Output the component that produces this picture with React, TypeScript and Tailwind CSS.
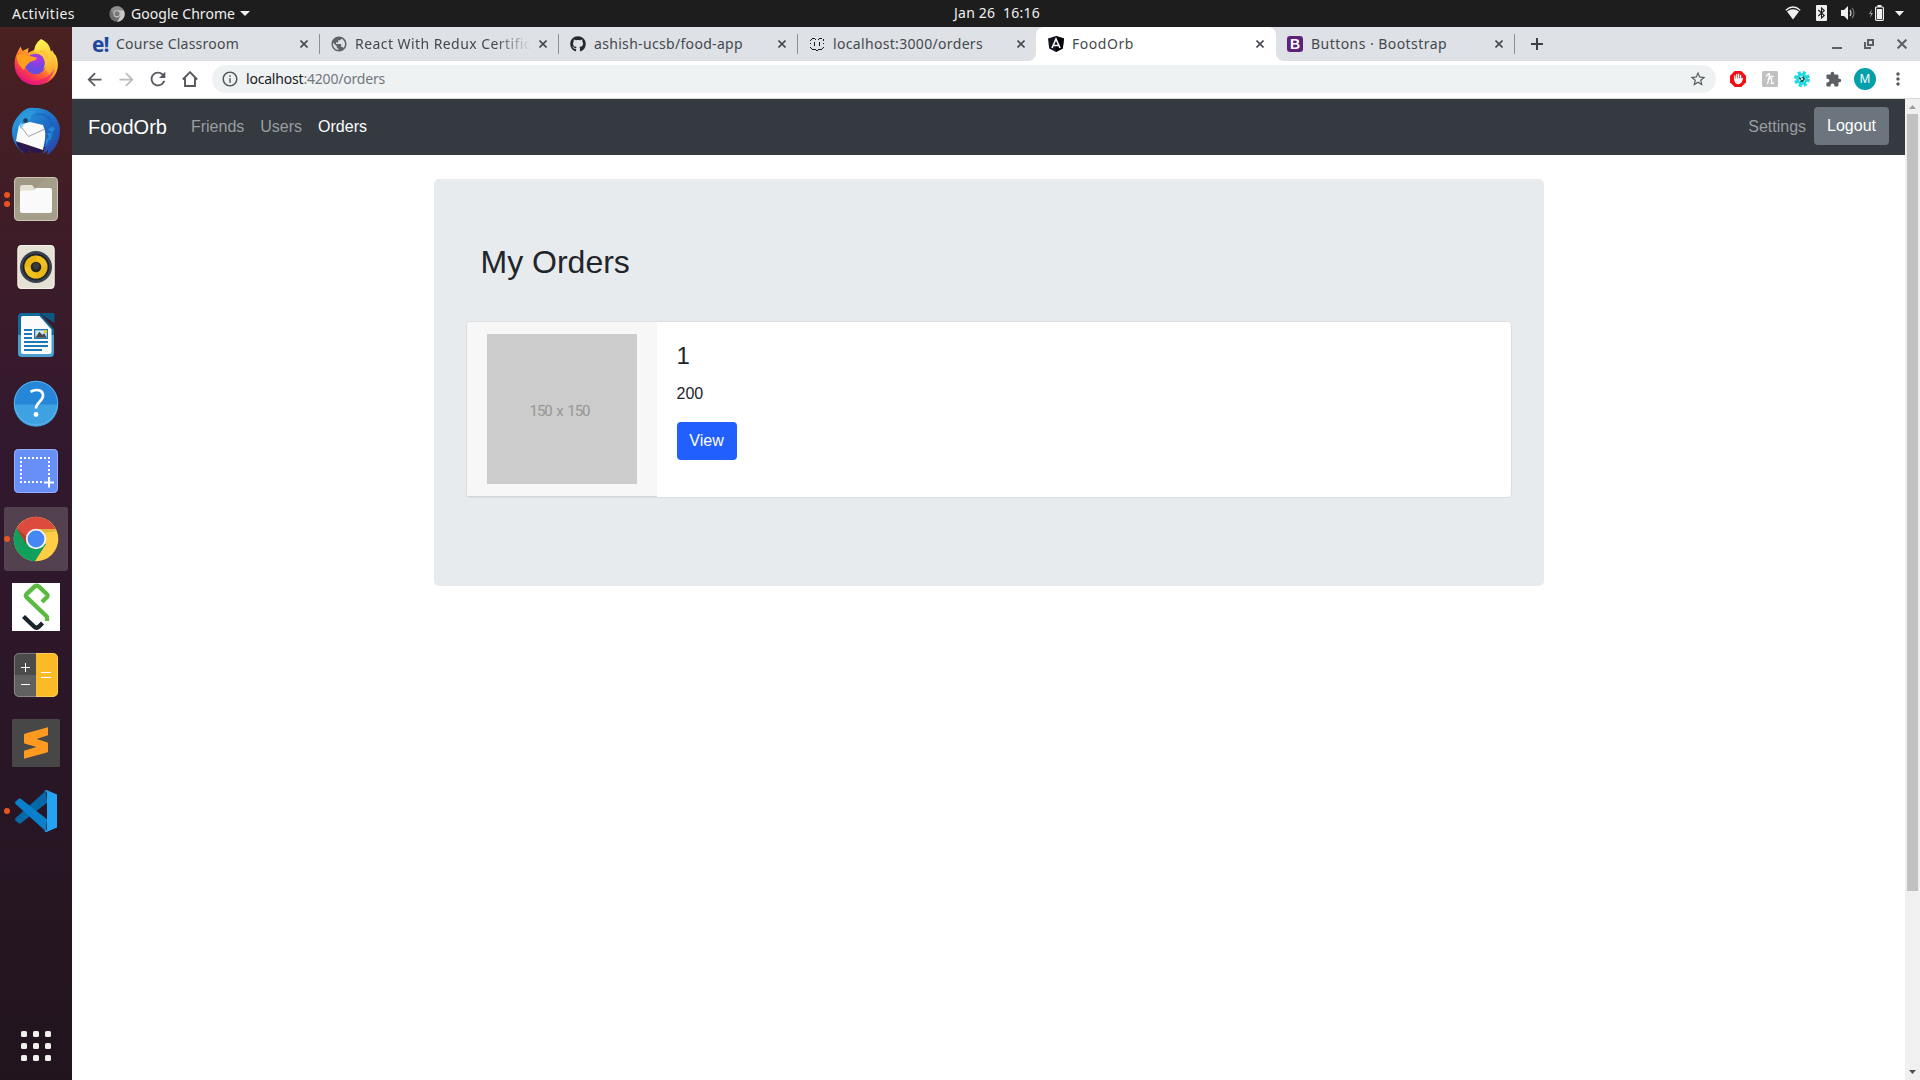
import { useLayoutEffect, useRef, useState, type ReactNode } from "react";
import { FaGithub } from "react-icons/fa";
import { MdArrowBack, MdArrowForward, MdExtension, MdInfoOutline, MdMoreVert, MdPublic, MdRefresh, MdStarBorder } from "react-icons/md";

/* Text whose letter spacing is adjusted so that it fills a given width. */
function FitText({ width, className = "", children }: { width: number; className?: string; children: ReactNode }) {
  const ref = useRef<HTMLSpanElement>(null);
  const [spacing, setSpacing] = useState(0);
  useLayoutEffect(() => {
    const el = ref.current;
    if (!el) return;
    const count = (el.textContent ?? "").length;
    setSpacing((width - el.getBoundingClientRect().width) / count);
  }, [width]);
  return (
    <span ref={ref} className={`inline-block whitespace-pre ${className}`} style={{ letterSpacing: `${spacing}px` }}>
      {children}
    </span>
  );
}

function TopBar() {
  return (
    <header className="flex h-[27px] shrink-0 items-center bg-[#1d1d1d] font-['Noto_Sans',sans-serif] text-[14px] leading-[27px] text-[#f0f0f0]">
      <div className="flex w-[954px] items-center pl-3">
        <FitText width={63}>Activities</FitText>
        <svg className="ml-[34px] size-4" viewBox="0 0 16 16">
          <circle cx="8" cy="8" r="7.7" fill="#6c6c6c" />
          <path d="M8 4.2h6.7A7.7 7.7 0 0 1 8 15.7L11.5 10z" fill="#c9c9c9" />
          <path d="M1.8 3.5A7.7 7.7 0 0 1 14.7 4.2H8L4.6 8.6z" fill="#8f8f8f" />
          <circle cx="8" cy="7.8" r="3.6" fill="#c4c4c4" />
          <circle cx="8" cy="7.8" r="2.5" fill="#777" />
        </svg>
        <FitText width={104} className="ml-[6px]">Google Chrome</FitText>
        <svg className="ml-[5px] h-[5px] w-[10px]" viewBox="0 0 10 5"><path d="M0 0h10L5 5z" fill="#f0f0f0" /></svg>
      </div>
      <div className="-mt-[2px]"><FitText width={86}>Jan 26  16:16</FitText></div>
      <div className="-mt-px flex flex-1 items-center justify-end pr-[16px]">
        <svg className="mr-[15px] h-4 w-4" viewBox="0 0 16 16">
          <path d="M.8 5.2Q8-1.2 15.2 5.2" fill="none" stroke="#f0f0f0" strokeWidth="1.3" />
          <path d="M2 6.6Q8 2 14 6.6L8 14.5z" fill="#f0f0f0" />
        </svg>
        <svg className="mr-[14px] h-4 w-[11px]" viewBox="0 0 11 16">
          <rect width="11" height="16" rx="1" fill="#f0f0f0" />
          <path d="M2.3 5l6 5.5L5.500 13V3l2.800 2.500-6 5.500" fill="none" stroke="#1d1d1d" strokeWidth="1.1" />
        </svg>
        <svg className="mr-[13px] h-4 w-[15px]" viewBox="0 0 15 16">
          <path d="M0 5h3l4-4v14l-4-4H0z" fill="#f0f0f0" />
          <path d="M9 5q2 3 0 6" fill="none" stroke="#d0d0d0" strokeWidth="1.2" />
          <path d="M11 2.8q4 5.2 0 10.4" fill="none" stroke="#777" strokeWidth="1.2" />
        </svg>
        <svg className="mr-[11px] h-4 w-[15px]" viewBox="0 0 15 16">
          <path d="M3 4L0 9h2l-1 4 3-5H2z" fill="#999" />
          <path d="M8.5 0h4v2h-4z" fill="#f0f0f0" />
          <rect x="6.6" y="2" width="7.8" height="13.3" rx="1" fill="none" stroke="#f0f0f0" strokeWidth="1.2" />
          <rect x="8" y="4" width="5" height="10" fill="#f0f0f0" />
        </svg>
        <svg className="h-[5px] w-[9px]" viewBox="0 0 9 5"><path d="M0 0h9L4.5 5z" fill="#f0f0f0" /></svg>
      </div>
    </header>
  );
}

function Firefox() {
  return (
    <svg viewBox="0 0 48 48" className="size-12">
      <defs>
        <linearGradient id="ff1" x1=".85" y1=".1" x2=".2" y2=".9">
          <stop offset="0" stopColor="#fff44f" /><stop offset=".35" stopColor="#ffa72c" /><stop offset=".65" stopColor="#ff5634" /><stop offset="1" stopColor="#e8127c" />
        </linearGradient>
        <radialGradient id="ff2" cx=".6" cy=".25"><stop offset="0" stopColor="#b833e1" /><stop offset="1" stopColor="#6a4be0" /></radialGradient>
        <linearGradient id="ff3" x1=".4" y1="0" x2=".6" y2="1"><stop offset="0" stopColor="#fff450" /><stop offset="1" stopColor="#ff9a28" /></linearGradient>
      </defs>
      <path d="M5 14L8.5 7.5 10.5 12 16.5 9 16 14C24 8 40 10 44 17 50 31 41 46 24 46 7 46-2 29 5 14z" fill="url(#ff1)" />
      <path d="M29 0c8 4 9 8 10 13l1-2c7 11 6 24-4 30 2-5 1-8-3-10 6-9-2-16-11-19 1-6 3-9 7-12z" fill="url(#ff3)" />
      <circle cx="23.5" cy="25" r="10.3" fill="url(#ff2)" />
      <path d="M5 16c4-2 8-1 10 1 4 0 9 1 10 2-1 3-5 3-7 4-3 3-5 4-6 8C7 27 4 22 5 16z" fill="#ff9f1e" />
      <path d="M24 13c5 0 8 2 9 5l-3-1c3 4 4 9 1 13 5-2 8-11 3-17-3-3-7-2-10 0z" fill="#ffc23a" />
      <path d="M2.3 29c4 10 14 15 25 12 8-2 13-7 15-12-1 9-8 17-18 17S4 38 2.3 29z" fill="#e9157f" opacity=".65" />
    </svg>
  );
}

function Thunderbird() {
  return (
    <svg viewBox="0 0 48 48" className="size-12">
      <defs><linearGradient id="tb" x1="0" y1="0" x2="1" y2="1"><stop offset="0" stopColor="#2bace6" /><stop offset=".5" stopColor="#1f6fc9" /><stop offset="1" stopColor="#2a3fa3" /></linearGradient></defs>
      <path d="M9 6C13 1 19 0 22 1c14-1 26 9 26 22 0 12-6 21-13 25l1-5-5 4 2-7L6 35l6 11C4 41 0 33 0 24c0-6 3-12 9-18z" fill="url(#tb)" />
      <path d="M4 35l27 8-4 3c-5 0-8-1-11-4l1 5C9 45 5 40 4 35z" fill="#291850" />
      <path d="M7 18l11-3 13 3 2 6c1 7-1 13-2 19L4 34c1-6 2-11 3-16z" fill="#fafafa" />
      <path d="M7 17l9.500 12.500L33 22" fill="none" stroke="#999" strokeWidth=".9" />
      <path d="M9 11c3-6 8-8 15-7l-5 5c0 4-3 6-8 8l-2 5-3-8z" fill="#2b99dc" />
      <path d="M20 10c9-6 18 1 18 7l4 2-3 1 3 3-4 1 3 4-5 1 2 5-4 1 1 5c10-8 11-23 1-31C31 5 24 6 20 10z" fill="#1665bd" opacity=".8" />
      <path d="M35 18l5 2-4 2 4 4-5 0 2 5-3 1v8l2-6 3-2 1-6 3-5z" fill="#2689d8" />
      <circle cx="13.500" cy="13.500" r="2.300" fill="#243c60" />
      <path d="M8 16l4 2-3 4z" fill="#8dd4f4" />
    </svg>
  );
}

function Files() {
  return (
    <svg viewBox="0 0 48 48" className="size-12">
      <rect x="2" y="2" width="44" height="44" rx="4.500" fill="#c9c4b4" />
      <rect x="3" y="3" width="42" height="42" rx="4" fill="#9f9885" />
      <path d="M3 34L34 3h7a4 4 0 0 1 4 4v34a4 4 0 0 1-4 4H7a4 4 0 0 1-4-4z" fill="#aaa391" opacity=".5" />
      <path d="M8 18v-6a2 2 0 0 1 2-2h10l3 3.500h-1v5z" fill="#e4e0d3" />
      <path d="M8 17.500a2 2 0 0 1 2-2h11l3-2.500h14a2 2 0 0 1 2 2V36a2 2 0 0 1-2 2H10a2 2 0 0 1-2-2z" fill="#fafafa" />
    </svg>
  );
}

function Rhythmbox() {
  return (
    <svg viewBox="0 0 48 48" className="size-12">
      <rect x="5.500" y="2" width="37" height="44" rx="4" fill="#e5e1d5" />
      <rect x="6" y="2.500" width="36" height="43" rx="4" fill="none" stroke="#f5f2ea" />
      <circle cx="24" cy="24" r="16" fill="#3c4350" />
      <circle cx="24" cy="24" r="13.500" fill="#20242d" />
      <circle cx="24" cy="24" r="11.500" fill="#f3c01e" />
      <path d="M12.500 24a11.500 11.500 0 0 1 11.500-11.500v11.500zM35.500 24a11.500 11.500 0 0 1-11.500 11.500v-11.500z" fill="#dba908" opacity=".4" />
      <circle cx="24" cy="24" r="5.300" fill="#262626" />
      <circle cx="24" cy="23" r="3.200" fill="#3c3c3c" />
    </svg>
  );
}

function Writer() {
  return (
    <svg viewBox="0 0 48 48" className="size-12">
      <path d="M10 2h18.500L42 17.500V42a4 4 0 0 1-4 4H10a4 4 0 0 1-4-4V6a4 4 0 0 1 4-4z" fill="#116a9c" />
      <path d="M6 24h36v18a4 4 0 0 1-4 4H10a4 4 0 0 1-4-4z" fill="#4a9fce" />
      <path d="M11 5h16.500L39.500 18.500V41a2 2 0 0 1-2 2H11a2 2 0 0 1-2-2V7a2 2 0 0 1 2-2z" fill="#fbfbfb" />
      <path d="M27 2H41q1.500 0 1.500 1.500V12z" fill="#0a5883" />
      <path d="M28 2.500l14.500 16" stroke="#34192d" strokeWidth="1.200" opacity=".6" />
      <path d="M12 19h8M12 23h8M12 27h8M12 31h24M12 35h24M12 39h18" stroke="#1a7ab3" strokeWidth="2" />
      <path d="M22 18h14v10H22z" fill="#1a7ab3" />
      <path d="M23.300 19.300h11.400v7.400H23.300z" fill="#cfe7f5" />
      <path d="M23.300 26.700l4-6 3 3 2-1.500 2.400 4.500z" fill="#4b4b4b" />
      <circle cx="33.500" cy="20.500" r="1.700" fill="#eccb13" />
    </svg>
  );
}

function Help() {
  return (
    <svg viewBox="0 0 48 48" className="size-12">
      <circle cx="24" cy="24" r="22.200" fill="#2687d8" />
      <path d="M1.800 25.500h44.400a22.200 22.200 0 0 1-44.400 0z" fill="#3ea2e2" />
      <circle cx="24" cy="24" r="21.700" fill="none" stroke="#65b7ee" strokeWidth=".8" />
      <path d="M18.500 12.800c6.500-3.500 12.500-1.500 12.500 3.700 0 6-7 6.500-7 13" fill="none" stroke="#fff" strokeWidth="2.700" />
      <circle cx="24" cy="35.500" r="2.400" fill="#fff" />
    </svg>
  );
}

function Screenshot() {
  return (
    <svg viewBox="0 0 48 48" className="size-12">
      <rect x="2" y="2" width="44" height="44" rx="4.500" fill="#688ff6" />
      <rect x="2.500" y="2.500" width="43" height="43" rx="4" fill="none" stroke="#92b0ff" />
      <path d="M8 11h30M9 14v23M37 14v17M12 35h18" fill="none" stroke="#fff" strokeWidth="2" strokeDasharray="2 2" />
      <path d="M32 35.500h10M37 30.500v10" stroke="#fff" strokeWidth="2" />
    </svg>
  );
}

function Chrome() {
  return (
    <svg viewBox="0 0 48 48" className="size-12">
      <circle cx="24" cy="24" r="22.300" fill="#ffce44" />
      <path d="M24 24L4.700 12.900A22.300 22.300 0 0 0 23 46.300L34 29z" fill="#11a05c" />
      <path d="M4.700 12.900A22.300 22.300 0 0 1 43.800 14H24L14.500 28.500z" fill="#dd4b3e" />
      <path d="M24 14h19.800l.8 2-13 2z" fill="#c99c28" opacity=".5" />
      <path d="M4.700 12.900L14 29l2-6z" fill="#ad3427" opacity=".7" />
      <circle cx="24" cy="24" r="10.200" fill="#f3f3f3" />
      <circle cx="24" cy="24" r="8.400" fill="#4587f3" />
    </svg>
  );
}

function StrokeS() {
  return (
    <svg viewBox="0 0 48 48" className="size-12">
      <path d="M0 0h48v48H0z" fill="#fff" />
      <path d="M30 19l5-5q1-1.500 0-2.700L27 3.600q-2-1.800-4.500 0l-8 7.500q-1.300 1.500 0 3l20.500 19.700V38" fill="none" stroke="#5abb40" strokeWidth="4.300" strokeLinejoin="round" />
      <path d="M11.500 33.500l10.500 10q2.500 2.500 5 0l3.500-3.500" fill="none" stroke="#17242c" strokeWidth="4.300" />
    </svg>
  );
}

function Calculator() {
  return (
    <svg viewBox="0 0 48 48" className="size-12">
      <path d="M7 2h17v44H7a5 5 0 0 1-5-5V7a5 5 0 0 1 5-5z" fill="#4b4b4b" />
      <path d="M2 24h22v22H7a5 5 0 0 1-5-5z" fill="#606060" />
      <path d="M24 2h17a5 5 0 0 1 5 5v34a5 5 0 0 1-5 5H24z" fill="#fbbb27" />
      <rect x="2.400" y="2.400" width="43.200" height="43.200" rx="4.800" fill="none" stroke="#fff" strokeOpacity=".35" strokeWidth=".8" />
      <path d="M9 16.500h9M13.500 12v9M9 33.500h9M29 21.500h10M29 26.500h10" stroke="#fff" strokeWidth="1" />
    </svg>
  );
}

function Sublime() {
  return (
    <svg viewBox="0 0 48 48" className="size-12">
      <rect width="48" height="48" rx="1.500" fill="#474747" />
      <path d="M12 24.500l24 5.500v-4L24 20z" fill="#d87b12" />
      <path d="M12 16q0-1.200 1.200-1.600L36 8.300v8L24.500 20 35 23.300q1 .3 1 1.400v7.600q0 1-1 1.300L12 39.800v-8L24.500 28 13 24.600q-1-.3-1-1.400z" fill="#ff9a20" />
    </svg>
  );
}

function VSCode() {
  return (
    <svg viewBox="0 0 48 48" className="size-12">
      <path d="M34 3.500L3.600 31q-1.200 1.200 0 2.400l3 2.800q1 .9 2.200 0L35 15.800z" fill="#0569a8" />
      <path d="M34 44.500L3.600 17q-1.200-1.200 0-2.400l3-2.800q1-.9 2.200 0L35 32.200z" fill="#0a7fcb" />
      <path d="M34.500 3L45 7.500v33L34.500 45q-1.500 0-2.500-1.500 3 1 3-1.500V6q0-2.500-3-1.500Q33 3 34.500 3z" fill="#23a3f2" />
    </svg>
  );
}

const dock: { name: string; icon: ReactNode; dots: number; active?: boolean }[] = [
  { name: "Firefox", icon: <Firefox />, dots: 0 },
  { name: "Thunderbird", icon: <Thunderbird />, dots: 0 },
  { name: "Files", icon: <Files />, dots: 2 },
  { name: "Rhythmbox", icon: <Rhythmbox />, dots: 0 },
  { name: "Writer", icon: <Writer />, dots: 0 },
  { name: "Help", icon: <Help />, dots: 0 },
  { name: "Screenshot", icon: <Screenshot />, dots: 0 },
  { name: "Chrome", icon: <Chrome />, dots: 1, active: true },
  { name: "StrokeS", icon: <StrokeS />, dots: 0 },
  { name: "Calculator", icon: <Calculator />, dots: 0 },
  { name: "Sublime", icon: <Sublime />, dots: 0 },
  { name: "VSCode", icon: <VSCode />, dots: 1 },
];

function Dock() {
  return (
    <aside className="flex w-[72px] shrink-0 flex-col bg-linear-to-b from-[#4a2020] via-[#32182e] via-40% to-[#21141d] pt-[2px]">
      {dock.map((item) => (
        <div key={item.name} className="flex h-[68px] items-center">
          <div className={`mx-1 flex h-16 w-full items-center ${item.active ? "rounded-[3px] bg-[#534150]" : ""}`}>
            <div className="flex w-2 shrink-0 flex-col gap-[3px]">
              {Array.from({ length: item.dots }, (_, i) => (
                <span key={i} className="size-[6px] rounded-full bg-[#e95420]" />
              ))}
            </div>
            {item.icon}
          </div>
        </div>
      ))}
      <div className="mt-auto mb-[19px] grid grid-cols-3 gap-[6px] self-center">
        {Array.from({ length: 9 }, (_, i) => (
          <span key={i} className="size-[6px] rounded-[1.500px] bg-[#f0f0ec]" />
        ))}
      </div>
    </aside>
  );
}

function CloseX({ className = "size-[8px]" }: { className?: string }) {
  return <svg className={className} viewBox="0 0 8 8"><path d="M.5.5l7 7M7.500.5l-7 7" stroke="currentColor" strokeWidth="1.600" /></svg>;
}

const tabs: { title: string; width: number; icon: ReactNode; active?: boolean; line?: boolean; fade?: boolean }[] = [
  {
    title: "Course Classroom", width: 123, line: true,
    icon: <span className="block w-4 font-['Open_Sans',sans-serif] text-[21px] leading-4 font-bold tracking-[-1px] text-[#1d489b]">e!</span>,
  },
  { title: "React With Redux Certific", width: 176, line: true, fade: true, icon: <MdPublic className="-m-px size-[18px] text-[#5f6368]" /> },
  { title: "ashish-ucsb/food-app", width: 149, line: true, icon: <FaGithub className="size-4 text-[#24292e]" /> },
  {
    title: "localhost:3000/orders", width: 150,
    icon: (
      <svg className="size-4" viewBox="0 0 16 16">
        <path d="M2 3.500h1M3 2.500h3M6 3.500h1M9 3.500h1M10 2.500h3M14 3.500h1M1 4.500h1M14 4.500h1M1 11.500h1M14 11.500h1M2 12.500h1M3 13.500h4M7 14.500h2M9 13.500h4M13 12.500h1M1 7.500h1M14 7.500h1" stroke="#1a1a1a" />
        <path d="M5.500 6v4M10.500 6v4" stroke="#1a1a1a" />
      </svg>
    ),
  },
  {
    title: "FoodOrb", width: 62, active: true,
    icon: (
      <svg className="size-4" viewBox="0 0 16 16">
        <path d="M8 0l8 2.600-1.200 10L8 16l-6.800-3.400L0 2.600z" fill="#13151f" />
        <path d="M8 0l8 2.600-1.200 10L8 16z" fill="#05060c" />
        <path d="M4 12L8 3l4 9M5.500 9.500h5" fill="none" stroke="#fff" strokeWidth="1.600" />
      </svg>
    ),
  },
  {
    title: "Buttons · Bootstrap", width: 136, line: true,
    icon: (
      <span className="block size-4 rounded-[3px] bg-[#5c2178] text-center font-['Liberation_Sans',sans-serif] text-[14px] leading-4 font-bold text-white">B</span>
    ),
  },
];

function TabStrip() {
  return (
    <div className="flex h-[34px] shrink-0 bg-[#dee1e6] pl-[9px] text-[#45494d]">
      {tabs.map((tab) => (
        <div
          key={tab.title}
          className={`relative flex items-center ${tab.active ? "-ml-px w-[240px] rounded-t-lg bg-white pl-3" : "w-[239px] pl-[11px]"}`}
        >
          <div className="size-4 shrink-0">{tab.icon}</div>
          <div className={`ml-2 w-[176px] shrink-0 overflow-hidden font-['Noto_Sans',sans-serif] text-[14px] leading-[34px] ${tab.fade ? "mask-r-from-80% mask-r-to-100%" : ""}`}>
            <FitText width={tab.width}>{tab.title}</FitText>
          </div>
          <CloseX className="ml-2 size-[8px] shrink-0" />
          {tab.line && <span className="ml-auto h-5 w-px bg-[#8d9095]" />}
          {tab.active && (
            <>
              <svg className="absolute bottom-0 -left-2 size-2" viewBox="0 0 8 8"><path d="M8 0v8H0a8 8 0 0 0 8-8z" fill="#fff" /></svg>
              <svg className="absolute -right-2 bottom-0 size-2" viewBox="0 0 8 8"><path d="M0 0v8h8a8 8 0 0 1-8-8z" fill="#fff" /></svg>
            </>
          )}
        </div>
      ))}
      <div className="flex flex-1 items-center pr-[13px] text-[#5b5f63]">
        <svg className="ml-4 size-3 text-[#3c4043]" viewBox="0 0 12 12"><path d="M6 0v12M0 6h12" stroke="currentColor" strokeWidth="2" /></svg>
        <svg className="mt-2 ml-auto h-[2px] w-[10px]" viewBox="0 0 10 2"><path d="M0 0h10v2H0z" fill="currentColor" /></svg>
        <svg className="ml-[22px] size-[10px]" viewBox="0 0 10 10"><path d="M4 1h5v5H4zM1 3v6h6" fill="none" stroke="currentColor" strokeWidth="2" /></svg>
        <CloseX className="ml-[23px] size-[10px]" />
      </div>
    </div>
  );
}

function Toolbar() {
  return (
    <div className="flex h-[38px] shrink-0 items-center border-b border-[#d6dadb] bg-white pb-px pl-3 text-[#55595e]">
      <MdArrowBack className="size-[21px]" />
      <MdArrowForward className="ml-[11px] size-[21px] text-[#b9bbbe]" />
      <MdRefresh className="ml-[10px] size-[22px]" />
      <svg className="ml-[13px] size-4" viewBox="0 0 16 16">
        <path d="M.8 8.500L8 1.200l7.200 7.300M3 7v8h10V7" fill="none" stroke="currentColor" strokeWidth="1.900" />
      </svg>
      <div className="ml-[14px] flex h-7 w-[1504px] items-center rounded-full bg-[#eef2f3] pl-[9px]">
        <MdInfoOutline className="size-[18px]" />
        <div className="ml-[7px] font-['Noto_Sans',sans-serif] text-[14px] leading-7 text-[#72777b]">
          <FitText width={139}><span className="text-[#202124]">localhost</span>:4200/orders</FitText>
        </div>
        <MdStarBorder className="mr-[9px] ml-auto size-[18px]" />
      </div>
      <svg className="ml-[14px] size-4" viewBox="0 0 16 16">
        <path d="M4.700 0h6.600L16 4.700v6.600L11.300 16H4.700L0 11.300V4.700z" fill="#f40d12" />
        <path d="M4.800 8.500V5M6.700 8V3.400M8.600 8V3.200M10.600 8V4.500" stroke="#fff" strokeWidth="1.300" strokeLinecap="round" />
        <path d="M4.200 7.500h7.100l1.200-.8q.8 0 .5.900-1.200 5.600-4.800 5.600-4 0-4-5.700z" fill="#fff" />
      </svg>
      <svg className="ml-4 size-4" viewBox="0 0 16 16">
        <rect width="16" height="16" rx="1.500" fill="#c1c1c1" />
        <path d="M4 5.500q2-3 3.500-2.800Q7 8 5.500 13M5.800 9q2-2.500 3.700-1.500Q10 9 9.300 12q.7 1.500 2.700-.5M7 5.500h4.500" fill="none" stroke="#fff" strokeWidth="1.300" />
      </svg>
      <svg className="ml-4 size-4" viewBox="0 0 16 16">
        <circle cx="8" cy="8" r="6.500" fill="none" stroke="#18dce2" strokeWidth="3" strokeDasharray="3.100 2" />
        <circle cx="8" cy="8" r="5.800" fill="#18dce2" />
        <circle cx="8" cy="8" r="3.300" fill="#a8f1f1" />
        <path d="M5 6l2 1 3-2 1 3-2 3H6l1-2-2-1z" fill="#27575e" />
        <circle cx="8" cy="8" r="1" fill="#fff" />
      </svg>
      <MdExtension className="ml-[15px] size-[17px] text-[#5b5f63]" />
      <span className="ml-[12px] flex size-[22px] items-center justify-center rounded-full bg-[#02a0ab] font-['Noto_Sans',sans-serif] text-[12px] leading-none text-white">M</span>
      <MdMoreVert className="ml-3 size-5" />
    </div>
  );
}

function Navbar() {
  return (
    <nav className="flex h-14 items-center bg-[#343a40] px-4 text-[16px] leading-6 text-[#9a9da0]">
      <a className="mr-4 text-[20px] leading-[30px] text-white">FoodOrb</a>
      <a className="p-2">Friends</a>
      <a className="p-2">Users</a>
      <a className="p-2 text-white">Orders</a>
      <a className="ml-auto p-2">Settings</a>
      <button className="mb-[2px] h-[38px] rounded bg-[#6c757d] px-[13px] pb-px leading-6 text-white">Logout</button>
    </nav>
  );
}

function OrderCard() {
  return (
    <div className="mt-[39.600px] flex rounded border border-[#dcdfe2] bg-white">
      <div className="rounded-t-[3px] border-b border-[#d8d8d8] bg-[#f7f7f7] px-5 py-3">
        <div className="flex size-[150px] items-center justify-center bg-[#cccccc] font-['Roboto',sans-serif] text-[15px] text-[#969696]">
          <span className="mt-[5px] -ml-[4px] [word-spacing:2px]"><FitText width={60}>150 x 150</FitText></span>
        </div>
      </div>
      <div className="flex flex-col items-start p-5">
        <h4 className="mb-[11.200px] text-[24px] leading-[28.800px]">1</h4>
        <p className="mb-4 text-[16px] leading-6">200</p>
        <button className="h-[38px] w-[60px] rounded bg-[#225fff] text-[16px] leading-6 text-white">View</button>
      </div>
    </div>
  );
}

function Scrollbar() {
  return (
    <div className="flex w-[15px] shrink-0 flex-col items-center bg-[#f0f0f0]">
      <svg className="mt-[6px] h-[4px] w-[7px]" viewBox="0 0 7 4"><path d="M3.500 0L7 4H0z" fill="#9d9d9d" /></svg>
      <div className="mt-[5px] h-[777px] w-[11px] bg-[#c1c1c1]" />
      <svg className="mt-auto mb-[6px] h-[4px] w-[7px]" viewBox="0 0 7 4"><path d="M0 0h7L3.500 4z" fill="#505050" /></svg>
    </div>
  );
}

export default function App() {
  return (
    <div className="flex h-[1080px] w-[1920px] flex-col overflow-hidden bg-white">
      <TopBar />
      <div className="flex min-h-0 flex-1">
        <Dock />
        <div className="flex min-w-0 flex-1 flex-col">
          <TabStrip />
          <Toolbar />
          <div className="flex min-h-0 flex-1">
            <div className="flex-1 font-['Liberation_Sans',sans-serif] text-[#212529]">
              <Navbar />
              <main className="mx-auto mt-6 h-[407px] w-[1110px] rounded-[5px] bg-[#e8ebee] px-8 py-16">
                <h2 className="pl-[15px] text-[32px] leading-[38.400px]">My Orders</h2>
                <OrderCard />
              </main>
            </div>
            <Scrollbar />
          </div>
        </div>
      </div>
    </div>
  );
}
